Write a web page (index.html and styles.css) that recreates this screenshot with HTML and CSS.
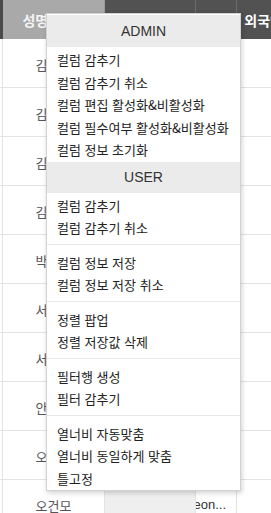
FILE: index.html
```html
<!DOCTYPE html>
<html lang="ko">
<head>
<meta charset="utf-8">
<link rel="stylesheet" href="styles.css">
</head>
<body>
<div class="wrap">
<div class="grid">
  <div class="hc hc-edge"></div>
  <div class="hc hc-sel">성명(한글)</div>
  <div class="hc">생년월일</div>
  <div class="hc">성별</div>
  <div class="hc">외국인여부</div>

  <div class="c c-edge"></div><div class="c c-name">김민수</div><div class="c c-ro"></div><div class="c c-txt"><span>minsu...</span></div><div class="c"></div>
  <div class="c c-edge"></div><div class="c c-name">김지현</div><div class="c c-ro"></div><div class="c c-txt"><span>jihyun...</span></div><div class="c"></div>
  <div class="c c-edge"></div><div class="c c-name">김태호</div><div class="c c-ro"></div><div class="c c-txt"><span>taeho...</span></div><div class="c"></div>
  <div class="c c-edge"></div><div class="c c-name">김하늘</div><div class="c c-ro"></div><div class="c c-txt"><span>haneul...</span></div><div class="c"></div>
  <div class="c c-edge"></div><div class="c c-name">박서준</div><div class="c c-ro"></div><div class="c c-txt"><span>seojun...</span></div><div class="c"></div>
  <div class="c c-edge"></div><div class="c c-name">서지우</div><div class="c c-ro"></div><div class="c c-txt"><span>jiwoo...</span></div><div class="c"></div>
  <div class="c c-edge"></div><div class="c c-name">서민재</div><div class="c c-ro"></div><div class="c c-txt"><span>minjae...</span></div><div class="c"></div>
  <div class="c c-edge"></div><div class="c c-name">안유진</div><div class="c c-ro"></div><div class="c c-txt"><span>yujin...</span></div><div class="c"></div>
  <div class="c c-edge"></div><div class="c c-name">오세훈</div><div class="c c-ro"></div><div class="c c-txt"><span>sehoon...</span></div><div class="c"></div>
  <div class="c c-edge"></div><div class="c c-name">오건모</div><div class="c c-ro"></div><div class="c c-txt"><span>geon...</span></div><div class="c"></div>
</div>
</div>

<div class="menu">
  <div class="m-head">ADMIN</div>
  <div class="m-group m-group-head">
    <div class="m-item">컬럼 감추기</div>
    <div class="m-item">컬럼 감추기 취소</div>
    <div class="m-item">컬럼 편집 활성화&amp;비활성화</div>
    <div class="m-item">컬럼 필수여부 활성화&amp;비활성화</div>
    <div class="m-item">컬럼 정보 초기화</div>
  </div>
  <div class="m-head m-head-user">USER</div>
  <div class="m-group m-group-head">
    <div class="m-item">컬럼 감추기</div>
    <div class="m-item">컬럼 감추기 취소</div>
  </div>
  <div class="m-group">
    <div class="m-item">컬럼 정보 저장</div>
    <div class="m-item">컬럼 정보 저장 취소</div>
  </div>
  <div class="m-group">
    <div class="m-item">정렬 팝업</div>
    <div class="m-item">정렬 저장값 삭제</div>
  </div>
  <div class="m-group">
    <div class="m-item">필터행 생성</div>
    <div class="m-item">필터 감추기</div>
  </div>
  <div class="m-group m-group-last">
    <div class="m-item">열너비 자동맞춤</div>
    <div class="m-item">열너비 동일하게 맞춤</div>
    <div class="m-item">틀고정</div>
  </div>
</div>
</body>
</html>
```

FILE: styles.css
```css
html, body {
  margin: 0;
  padding: 0;
  background: #ffffff;
  overflow: hidden;
}
body {
  width: 271px;
  height: 513px;
  position: relative;
  font-family: "Liberation Sans", "Noto Sans CJK KR", sans-serif;
}

.wrap {
  width: 271px;
  height: 513px;
  overflow: hidden;
}

.grid {
  display: grid;
  grid-template-columns: 3px 102px 91px 41px 80px;
  grid-template-rows: 39px;
  grid-auto-rows: 49px;
  width: 317px;
}

.hc {
  box-sizing: border-box;
  background: #525252;
  border-right: 1px solid #6a6a6a;
  color: #ffffff;
  font-family: "Noto Sans CJK KR", sans-serif;
  font-weight: 700;
  font-size: 14px;
  display: flex;
  align-items: center;
  justify-content: center;
  white-space: nowrap;
  overflow: hidden;
}
.hc-edge {
  background: #4a4a4a;
  border-right: none;
}
.hc-sel {
  background: #a9a9a9;
  color: #f4f4f4;
  border-right: 1px solid #9a9a9a;
}

.c {
  box-sizing: border-box;
  border-right: 1px solid #e3e3e3;
  border-bottom: 1px solid #e3e3e3;
  background: #ffffff;
  font-size: 13px;
  color: #555555;
  display: flex;
  align-items: center;
  white-space: nowrap;
  overflow: hidden;
}
.c-edge {
  background: #ffffff;
}
.c-name {
  justify-content: center;
  font-family: "Noto Sans CJK KR", sans-serif;
  padding-top: 2px;
}
.c-ro {
  background: #efefef;
}
.c-txt {
  justify-content: flex-end;
  padding-right: 10px;
  color: #333333;
  font-size: 13px;
}
.c-txt span {
  flex: none;
}

.menu {
  position: absolute;
  left: 46px;
  top: 13px;
  width: 195px;
  box-sizing: border-box;
  background: #ffffff;
  border: 1px solid #d2d2d2;
  box-shadow: 1px 2px 5px rgba(0, 0, 0, 0.18);
  padding: 1px 0 0;
  color: #222222;
}
.m-head {
  height: 32px;
  background: #ebebeb;
  font-size: 14px;
  display: flex;
  align-items: center;
  justify-content: center;
  color: #333333;
}
.m-head-user {
  height: 31px;
}
.m-group {
  padding: 7px 0 4px;
  border-top: 1px solid #e8e8e8;
}
.m-group-head {
  border-top: none;
  padding: 2px 0 0;
}
.m-group-head + .m-group {
  margin-top: 4px;
}
.m-group-last {
  padding-bottom: 0;
}
.m-item {
  height: 22.5px;
  line-height: 22.5px;
  padding-left: 10px;
  font-family: "Noto Sans CJK KR", sans-serif;
  font-size: 13px;
  white-space: nowrap;
}
```
